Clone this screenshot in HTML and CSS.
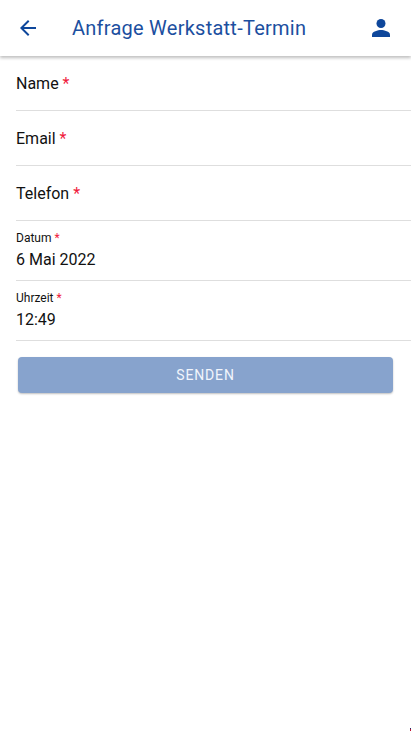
FILE: index.html
```html
<!DOCTYPE html>
<html lang="de"><head><meta charset="utf-8"><title>Anfrage Werkstatt-Termin</title><link rel="stylesheet" href="styles.css"></head>
<body>
<header class="bar">
<svg class="icon back" viewBox="0 0 24 24"><path d="M20 11H7.83l5.59-5.59L12 4l-8 8 8 8 1.41-1.41L7.83 13H20z"/></svg>
<h1 class="title">Anfrage Werkstatt-Termin</h1>
<svg class="icon user" viewBox="0 0 28 28"><circle cx="14" cy="9.5" r="4.5"/><path d="M5 23v-2.3c0-3 6-4.6 9-4.6s9 1.6 9 4.6V23z"/></svg>
</header>
<main class="form">
<div class="field"><span>Name <b class="req">*</b></span></div>
<div class="field"><span>Email <b class="req">*</b></span></div>
<div class="field"><span>Telefon <b class="req">*</b></span></div>
<div class="field stacked"><span class="label">Datum <b class="req">*</b></span><span class="value">6 Mai 2022</span></div>
<div class="field stacked"><span class="label">Uhrzeit <b class="req">*</b></span><span class="value">12:49</span></div>
<button class="send" disabled>SENDEN</button>
</main>
<i class="speck"></i>
</body></html>
```
FILE: styles.css
```css
* { box-sizing: border-box; }
body { margin: 0; height: 731px; overflow: hidden; position: relative; background: #fff; color: #111; font: 16px/20px Roboto, sans-serif; }
.bar { height: 56px; display: flex; align-items: center; padding: 0 16px; background: #fff; box-shadow: 0 2px 3px rgba(0,0,0,.25); }
.icon { width: 24px; height: 24px; fill: #0e479b; flex: none; }
.back { margin-right: 32px; }
.title { margin: 0; flex: 1; font-size: 20px; line-height: 24px; font-weight: 400; letter-spacing: .25px; color: #1c4f9f; white-space: nowrap; }
.user { width: 28px; height: 28px; }
.form { display: flex; flex-direction: column; }
.field { height: 55px; margin-left: 16px; border-bottom: 1px solid #dedede; padding-top: 2px; display: flex; align-items: center; }
.req { font-weight: 400; color: #f01a3c; }
.stacked { height: 60px; flex-direction: column; align-items: flex-start; padding-top: 9px; }
.label { font-size: 12px; line-height: 16px; }
.value { margin-top: 4px; }
.send { height: 36px; margin: 16px 18px 0; padding: 0; border: 0; border-radius: 4px; background: #87a3cd; color: #f1f5fc; font: 14px/36px Roboto, sans-serif; letter-spacing: .84px; box-shadow: 0 1px 2px rgba(0,0,0,.25); }
.speck { position: absolute; right: 0; bottom: 0; width: 1px; height: 3px; background: linear-gradient(#20306a 1px, #c01030 1px); }
```
